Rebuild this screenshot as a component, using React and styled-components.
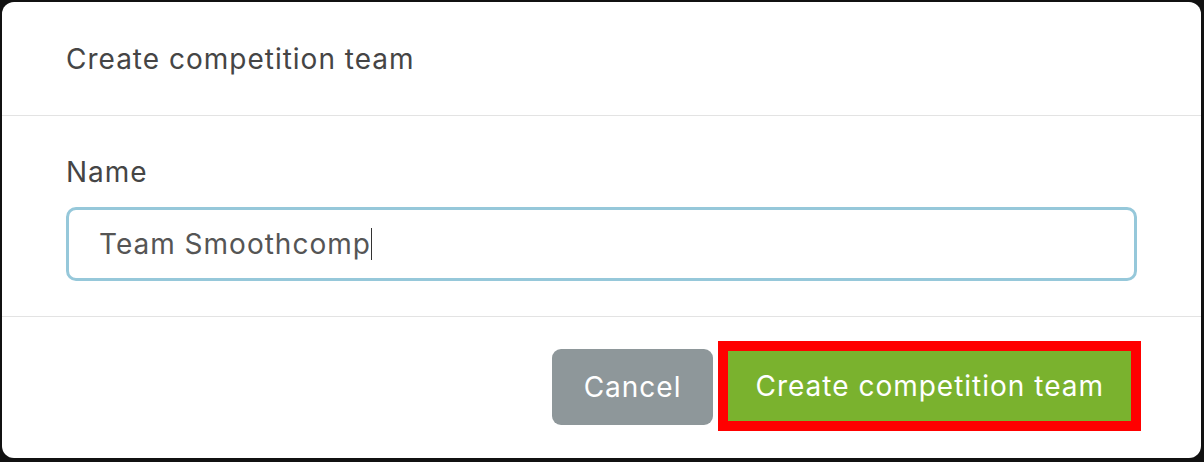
import React from "react";
import styled, { createGlobalStyle } from "styled-components";

const GlobalStyle = createGlobalStyle`
  html, body {
    margin: 0;
    padding: 0;
    background: #111111;
  }
  * { box-sizing: border-box; }
`;

const Backdrop = styled.div`
  width: 1204px;
  height: 462px;
  padding: 2px 3px 4px 2px;
  background: #111111;
  font-family: Inter, "Noto Sans", "Liberation Sans", sans-serif;
  font-size: 28px;
  letter-spacing: 1px;
`;

const Modal = styled.div`
  width: 1199px;
  height: 456px;
  background: #ffffff;
  border-radius: 12px;
  display: flex;
  flex-direction: column;
  overflow: hidden;
`;

const Header = styled.div`
  height: 114px;
  padding: 0 64px;
  display: flex;
  align-items: center;
  border-bottom: 1px solid #e3e3e3;
`;

const Title = styled.h2`
  margin: 0;
  font-size: 28px;
  font-weight: 400;
  color: #454545;
`;

const Body = styled.div`
  height: 201px;
  padding: 39px 64px 0 64px;
  display: flex;
  flex-direction: column;
  border-bottom: 1px solid #e3e3e3;
`;

const Label = styled.label`
  font-size: 28px;
  line-height: 34px;
  color: #454545;
  margin-bottom: 18px;
`;

const Field = styled.div`
  height: 74px;
  border: 3px solid #96c8da;
  border-radius: 10px;
  padding: 0 30px 0 30px;
  display: flex;
  align-items: center;
  font-size: 28px;
  color: #555555;
`;

const Caret = styled.span`
  display: inline-block;
  width: 1px;
  height: 32px;
  background: #333333;
`;

const Footer = styled.div`
  flex: 1;
  padding: 0 60px 2px 0;
  display: flex;
  align-items: center;
  justify-content: flex-end;
  gap: 5px;
`;

const Button = styled.button`
  border: none;
  font-family: inherit;
  font-size: 28px;
  letter-spacing: 1px;
  color: #ffffff;
  height: ${(p) => p.$h}px;
  padding: 0 ${(p) => p.$px}px;
  background: ${(p) => p.$bg};
  border-radius: ${(p) => p.$r}px;
  cursor: pointer;
`;

const Highlight = styled.div`
  border: 10px solid #ff0000;
  margin-bottom: 2px;
  display: flex;
`;

export default function App() {
  return (
    <>
      <GlobalStyle />
      <Backdrop>
        <Modal>
          <Header>
            <Title>Create competition team</Title>
          </Header>
          <Body>
            <Label>Name</Label>
            <Field>
              Team Smoothcomp
              <Caret />
            </Field>
          </Body>
          <Footer>
            <Button $h={76} $px={32} $bg="#8e979a" $r={9}>
              Cancel
            </Button>
            <Highlight>
              <Button $h={70} $px={27} $bg="#7ab22e" $r={0}>
                Create competition team
              </Button>
            </Highlight>
          </Footer>
        </Modal>
      </Backdrop>
    </>
  );
}
